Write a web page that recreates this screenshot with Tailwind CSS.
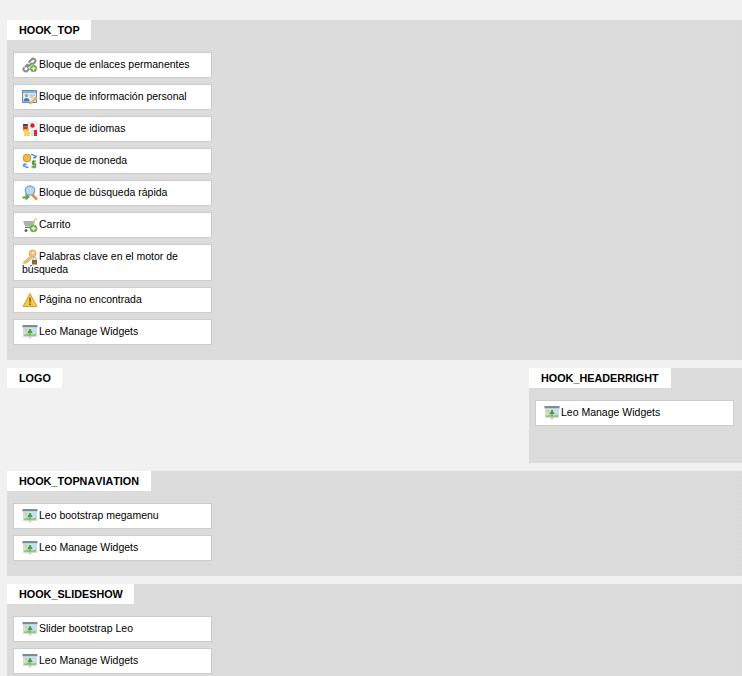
<!DOCTYPE html>
<html lang="en">
<head>
  <meta charset="UTF-8">
  <meta name="viewport" content="width=device-width, initial-scale=1.0">
  <title>Hooks</title>
  <script src="https://cdn.jsdelivr.net/npm/@tailwindcss/browser@4"></script>
</head>
<body class="bg-[#f1f1f1] h-[676px] overflow-hidden font-['Liberation_Sans',Arial,sans-serif] text-[10.5px] leading-[13px] text-black">
  <svg class="hidden">
    <symbol id="i-link" viewBox="0 0 16 16">
      <path d="M2.500 10.500 L1.500 11.500 Q1 13 2.500 14 Q4 15 5 14 L7.500 11.500 M5 10.500 L10 6 M6.500 5.500 L9.500 2.500 Q11 1 12.500 2 Q14 3.500 13 5 L10.500 7.500 M3 10 L6 7" fill="none" stroke="#8a8a8a" stroke-width="2"/>
      <circle cx="11.500" cy="11.500" r="3.500" fill="#6cb33f"/>
      <path d="M11.500 9.500v4M9.500 11.500h4" stroke="#fff" stroke-width="1.200"/>
    </symbol>
    <symbol id="i-user" viewBox="0 0 16 16">
      <rect x="0.500" y="1.500" width="14" height="12" fill="#dcebf8" stroke="#5b8fc7"/>
      <rect x="1" y="2" width="13" height="2" fill="#7fb0de"/>
      <circle cx="4.500" cy="6.500" r="1.700" fill="#d99a5b"/>
      <path d="M1.500 12.500 q0-3.500 3-3.500 t3 3.500z" fill="#4a78b0"/>
      <path d="M8 6h5M8 8h3" stroke="#9ab8d6"/>
      <path d="M6.500 15 L13.500 7.500 L15.500 9.500 L8.500 15.500z" fill="#eeb14a"/>
    </symbol>
    <symbol id="i-lang" viewBox="0 0 16 16">
      <rect x="1" y="3" width="6" height="2.500" fill="#444"/>
      <rect x="1" y="5.500" width="6" height="3" fill="#d8302a"/>
      <rect x="1" y="8.500" width="6" height="2" fill="#f2c230"/>
      <rect x="6" y="1" width="9" height="7" fill="#f6f6f6" stroke="#ccc" stroke-width="0.500"/>
      <circle cx="10.500" cy="4.500" r="2.200" fill="#d8202a"/>
      <rect x="2" y="10.500" width="6" height="4.500" fill="#f6d860"/>
      <rect x="9" y="9" width="3" height="6" fill="#d9e2ea"/>
      <rect x="12" y="9" width="3" height="6" fill="#d8302a"/>
    </symbol>
    <symbol id="i-money" viewBox="0 0 16 16">
      <circle cx="5" cy="5" r="4" fill="#e9b949" stroke="#c08e25" stroke-width="0.700"/>
      <path d="M9 1.500 q4 0 5 3.500 M13.500 5 l1-2.500 M13.500 5 l-2.500-.500" fill="none" stroke="#4e9ad6" stroke-width="1.400"/>
      <path d="M6.500 14.500 q-4 0-5-3.500 M2 11 l-1 2.500 M2 11 l2.500 .500" fill="none" stroke="#4e9ad6" stroke-width="1.400"/>
      <path d="M14 8.500 H10.500 V11 H13.500 V14 H9.500 M11.800 7 V15.500" fill="none" stroke="#5a9f4a" stroke-width="1.300"/>
    </symbol>
    <symbol id="i-search" viewBox="0 0 16 16">
      <path d="M10 9.500 L15 14.500" stroke="#d9933a" stroke-width="2.600"/>
      <circle cx="8" cy="5.500" r="4.700" fill="#bcd9ef" stroke="#7d9db8" stroke-width="1.200"/>
      <path d="M0.500 11.500h3v-3l4.500 3.500-4.500 3.500v-2h-3z" fill="#5da53c"/>
    </symbol>
    <symbol id="i-cart" viewBox="0 0 16 16">
      <path d="M15 1.500 L12.500 2.500 L11.500 9 H3.500" fill="none" stroke="#c8b06a" stroke-width="1"/>
      <path d="M1 4 H12 L11 9 H3z" fill="#b0b0b0"/>
      <path d="M3 10.500h8" stroke="#777" stroke-width="1.200"/>
      <circle cx="4" cy="13.500" r="1.500" fill="#666"/>
      <circle cx="11.500" cy="11.500" r="3.700" fill="#6cb33f"/>
      <path d="M11.500 9.500v4M9.500 11.500h4" stroke="#fff" stroke-width="1.300"/>
    </symbol>
    <symbol id="i-key" viewBox="0 0 16 16">
      <circle cx="10.500" cy="4.500" r="3.500" fill="#f0c277" stroke="#cf9a45" stroke-width="0.700"/>
      <path d="M8.500 7 L1 13.500 L2.500 15 L4 13.500 L5 14 L10 9" fill="#f0c277" stroke="#cf9a45" stroke-width="0.600"/>
      <circle cx="11" cy="3.800" r="1" fill="#fff"/>
      <rect x="10" y="11" width="5" height="4.500" fill="#8a6a2a"/>
      <path d="M11 11 v-1.500 a1.500 1.500 0 0 1 3 0 v1.500" fill="none" stroke="#999"/>
    </symbol>
    <symbol id="i-warn" viewBox="0 0 16 16">
      <path d="M8 1.500 L15 14.500 H1z" fill="#f6c945" stroke="#d69f2c" stroke-linejoin="round"/>
      <path d="M8 5.500v5" stroke="#7a5a20" stroke-width="1.500"/>
      <rect x="7.200" y="11.500" width="1.600" height="1.600" fill="#7a5a20"/>
    </symbol>
    <symbol id="i-leo" viewBox="0 0 16 16">
      <rect x="0.500" y="1" width="15" height="2.500" fill="#7f8c95"/>
      <rect x="1.500" y="3.500" width="13" height="9" fill="#bfe3f2" stroke="#c5d0d6" stroke-width="0.700"/>
      <path d="M2 12 L2 10.500 L6 9.500 L10 10.500 L14 9.500 V12z" fill="#9ccb66"/>
      <path d="M8 11.500 V8 M5.800 8.800 L8 5 L10.200 8.800z" stroke="#3f8a30" fill="#4f9e3a" stroke-width="0.600"/>
      <circle cx="4" cy="6" r="1.300" fill="#f2c94c"/>
      <path d="M6 12.500 L8 15 L10 12.500z" fill="#c2c9cd"/>
    </symbol>
  </svg>

  <div class="pt-[20px] flex flex-col gap-[8px]">
    <!-- HOOK_TOP -->
    <section class="ml-[7px] bg-[#dcdcdc] bg-[radial-gradient(circle,#dadada_1px,transparent_1px)] bg-size-[4px_4px] pb-[15px]">
      <h3 class="w-[84px] h-[20px] bg-white pl-[12px] font-bold text-[10.8px] [font-kerning:none] leading-[20px]">HOOK_TOP</h3>
      <div class="mt-[12px] ml-[6px] w-[199px] flex flex-col gap-[6px]">
        <div class="min-h-[26px] bg-white border border-[#ccc] px-[8px] pt-[5px] pb-[4px]"><svg class="inline-block align-middle w-[16px] h-[16px] -my-[2px] mr-[1px]"><use href="#i-link"/></svg>Bloque de enlaces permanentes</div>
        <div class="min-h-[26px] bg-white border border-[#ccc] px-[8px] pt-[5px] pb-[4px]"><svg class="inline-block align-middle w-[16px] h-[16px] -my-[2px] mr-[1px]"><use href="#i-user"/></svg>Bloque de información personal</div>
        <div class="min-h-[26px] bg-white border border-[#ccc] px-[8px] pt-[5px] pb-[4px]"><svg class="inline-block align-middle w-[16px] h-[16px] -my-[2px] mr-[1px]"><use href="#i-lang"/></svg>Bloque de idiomas</div>
        <div class="min-h-[26px] bg-white border border-[#ccc] px-[8px] pt-[5px] pb-[4px]"><svg class="inline-block align-middle w-[16px] h-[16px] -my-[2px] mr-[1px]"><use href="#i-money"/></svg>Bloque de moneda</div>
        <div class="min-h-[26px] bg-white border border-[#ccc] px-[8px] pt-[5px] pb-[4px]"><svg class="inline-block align-middle w-[16px] h-[16px] -my-[2px] mr-[1px]"><use href="#i-search"/></svg>Bloque de búsqueda rápida</div>
        <div class="min-h-[26px] bg-white border border-[#ccc] px-[8px] pt-[5px] pb-[4px]"><svg class="inline-block align-middle w-[16px] h-[16px] -my-[2px] mr-[1px]"><use href="#i-cart"/></svg>Carrito</div>
        <div class="min-h-[26px] bg-white border border-[#ccc] px-[8px] pt-[5px] pb-[4px]"><svg class="inline-block align-middle w-[16px] h-[16px] -my-[2px] mr-[1px]"><use href="#i-key"/></svg>Palabras clave en el motor de búsqueda</div>
        <div class="min-h-[26px] bg-white border border-[#ccc] px-[8px] pt-[5px] pb-[4px]"><svg class="inline-block align-middle w-[16px] h-[16px] -my-[2px] mr-[1px]"><use href="#i-warn"/></svg>Página no encontrada</div>
        <div class="min-h-[26px] bg-white border border-[#ccc] px-[8px] pt-[5px] pb-[4px]"><svg class="inline-block align-middle w-[16px] h-[16px] -my-[2px] mr-[1px]"><use href="#i-leo"/></svg>Leo Manage Widgets</div>
      </div>
    </section>

    <!-- LOGO / HOOK_HEADERRIGHT -->
    <div class="flex justify-between">
      <section class="ml-[7px]">
        <h3 class="w-[55px] h-[20px] bg-white pl-[12px] font-bold text-[10.8px] [font-kerning:none] leading-[20px]">LOGO</h3>
      </section>
      <section class="w-[213px] min-h-[95px] bg-[#dcdcdc] bg-[radial-gradient(circle,#dadada_1px,transparent_1px)] bg-size-[4px_4px]">
        <h3 class="w-[142px] h-[20px] bg-white pl-[12px] font-bold text-[10.8px] [font-kerning:none] leading-[20px]">HOOK_HEADERRIGHT</h3>
        <div class="mt-[12px] ml-[6px] w-[199px] flex flex-col gap-[6px]">
          <div class="min-h-[26px] bg-white border border-[#ccc] px-[8px] pt-[5px] pb-[4px]"><svg class="inline-block align-middle w-[16px] h-[16px] -my-[2px] mr-[1px]"><use href="#i-leo"/></svg>Leo Manage Widgets</div>
        </div>
      </section>
    </div>

    <!-- HOOK_TOPNAVIATION -->
    <section class="ml-[7px] bg-[#dcdcdc] bg-[radial-gradient(circle,#dadada_1px,transparent_1px)] bg-size-[4px_4px] pb-[15px]">
      <h3 class="w-[144px] h-[20px] bg-white pl-[12px] font-bold text-[10.8px] [font-kerning:none] leading-[20px]">HOOK_TOPNAVIATION</h3>
      <div class="mt-[12px] ml-[6px] w-[199px] flex flex-col gap-[6px]">
        <div class="min-h-[26px] bg-white border border-[#ccc] px-[8px] pt-[5px] pb-[4px]"><svg class="inline-block align-middle w-[16px] h-[16px] -my-[2px] mr-[1px]"><use href="#i-leo"/></svg>Leo bootstrap megamenu</div>
        <div class="min-h-[26px] bg-white border border-[#ccc] px-[8px] pt-[5px] pb-[4px]"><svg class="inline-block align-middle w-[16px] h-[16px] -my-[2px] mr-[1px]"><use href="#i-leo"/></svg>Leo Manage Widgets</div>
      </div>
    </section>

    <!-- HOOK_SLIDESHOW -->
    <section class="ml-[7px] bg-[#dcdcdc] bg-[radial-gradient(circle,#dadada_1px,transparent_1px)] bg-size-[4px_4px] pb-[15px]">
      <h3 class="w-[127px] h-[20px] bg-white pl-[12px] font-bold text-[10.8px] [font-kerning:none] leading-[20px]">HOOK_SLIDESHOW</h3>
      <div class="mt-[12px] ml-[6px] w-[199px] flex flex-col gap-[6px]">
        <div class="min-h-[26px] bg-white border border-[#ccc] px-[8px] pt-[5px] pb-[4px]"><svg class="inline-block align-middle w-[16px] h-[16px] -my-[2px] mr-[1px]"><use href="#i-leo"/></svg>Slider bootstrap Leo</div>
        <div class="min-h-[26px] bg-white border border-[#ccc] px-[8px] pt-[5px] pb-[4px]"><svg class="inline-block align-middle w-[16px] h-[16px] -my-[2px] mr-[1px]"><use href="#i-leo"/></svg>Leo Manage Widgets</div>
      </div>
    </section>
  </div>
</body>
</html>
